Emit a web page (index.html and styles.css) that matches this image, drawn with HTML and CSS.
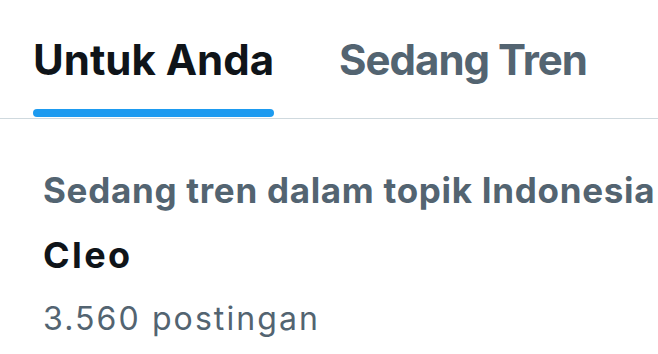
FILE: index.html
```html
<!DOCTYPE html>
<html lang="id">

<head>
    <meta charset="UTF-8">
    <meta name="viewport" content="width=device-width, initial-scale=1.0">
    <title>Tren</title>
    <link rel="stylesheet" href="styles.css">
</head>

<body>
    <nav class="tabs">
        <div class="tab active">
            <span class="tab-label">Untuk Anda</span>
            <span class="indicator"></span>
        </div>
        <div class="tab">
            <span class="tab-label">Sedang Tren</span>
        </div>
    </nav>

    <div class="trend">
        <div class="trend-context">Sedang tren dalam topik Indonesia</div>
        <div class="trend-name">Cleo</div>
        <div class="trend-count">3.560 postingan</div>
    </div>
</body>

</html>
```

FILE: styles.css
```css
* {
    margin: 0;
    padding: 0;
    box-sizing: border-box;
}

body {
    font-family: Inter, "Noto Sans", sans-serif;
    background-color: #fff;
    color: #0f1419;
    overflow: hidden;
}

/* tab bar */
.tabs {
    display: flex;
    gap: 65px;
    padding-left: 33px;
    height: 119px;
    border-bottom: 1px solid #cfd9de;
}

.tab {
    display: flex;
    flex-direction: column;
    justify-content: flex-end;
}

.tab-label {
    font-size: 42px;
    font-weight: 700;
    line-height: 50px;
    color: #536471;
    letter-spacing: -1px;
    margin-bottom: 33px;
}

.tab.active .tab-label {
    color: #0f1419;
    letter-spacing: 0;
    margin-bottom: 24px;
}

.indicator {
    display: block;
    height: 8px;
    margin-bottom: 1px;
    border-radius: 4px;
    background-color: #1d9bf0;
}

/* trend item */
.trend {
    display: flex;
    flex-direction: column;
    gap: 20px;
    padding: 48px 0 0 43px;
    white-space: nowrap;
}

.trend-context {
    font-size: 35px;
    font-weight: 700;
    line-height: 46px;
    letter-spacing: 0.7px;
    color: #536471;
}

.trend-name {
    font-size: 36px;
    font-weight: 700;
    line-height: 44px;
    letter-spacing: 2.4px;
}

.trend-count {
    font-size: 32px;
    line-height: 44px;
    letter-spacing: 2.1px;
    color: #536471;
}
```
